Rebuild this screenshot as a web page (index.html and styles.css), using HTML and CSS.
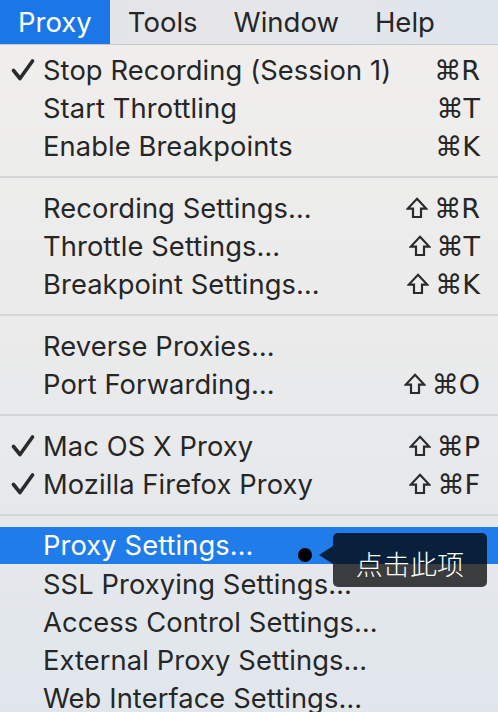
FILE: index.html
```html
<!DOCTYPE html>
<html>
<head>
<meta charset="utf-8">
<link rel="stylesheet" href="styles.css">
</head>
<body>
<div class="screen">
  <div class="menubar">
    <div class="mb-item active">Proxy</div>
    <div class="mb-item">Tools</div>
    <div class="mb-item">Window</div>
    <div class="mb-item">Help</div>
  </div>
  <div class="menu">
    <div class="group first">
      <div class="row"><span class="check"><svg class="tick" viewBox="0 0 24 22"><path d="M2.5 11.5 L9 19.5 L21.5 2"/></svg></span><span class="label">Stop Recording (Session 1)</span><span class="key">⌘R</span></div>
      <div class="row"><span class="check"></span><span class="label">Start Throttling</span><span class="key">⌘T</span></div>
      <div class="row"><span class="check"></span><span class="label">Enable Breakpoints</span><span class="key">⌘K</span></div>
    </div>
    <div class="sep"></div>
    <div class="group">
      <div class="row"><span class="check"></span><span class="label">Recording Settings…</span><span class="key"><svg class="shift" viewBox="0 0 22 22"><path d="M11 1.8 L20.2 11.6 H15 V20 H7 V11.6 H1.8 Z"/></svg>⌘R</span></div>
      <div class="row"><span class="check"></span><span class="label">Throttle Settings…</span><span class="key"><svg class="shift" viewBox="0 0 22 22"><path d="M11 1.8 L20.2 11.6 H15 V20 H7 V11.6 H1.8 Z"/></svg>⌘T</span></div>
      <div class="row"><span class="check"></span><span class="label">Breakpoint Settings…</span><span class="key"><svg class="shift" viewBox="0 0 22 22"><path d="M11 1.8 L20.2 11.6 H15 V20 H7 V11.6 H1.8 Z"/></svg>⌘K</span></div>
    </div>
    <div class="sep"></div>
    <div class="group">
      <div class="row"><span class="check"></span><span class="label">Reverse Proxies…</span><span class="key"></span></div>
      <div class="row"><span class="check"></span><span class="label">Port Forwarding…</span><span class="key"><svg class="shift" viewBox="0 0 22 22"><path d="M11 1.8 L20.2 11.6 H15 V20 H7 V11.6 H1.8 Z"/></svg>⌘O</span></div>
    </div>
    <div class="sep"></div>
    <div class="group">
      <div class="row"><span class="check"><svg class="tick" viewBox="0 0 24 22"><path d="M2.5 11.5 L9 19.5 L21.5 2"/></svg></span><span class="label">Mac OS X Proxy</span><span class="key"><svg class="shift" viewBox="0 0 22 22"><path d="M11 1.8 L20.2 11.6 H15 V20 H7 V11.6 H1.8 Z"/></svg>⌘P</span></div>
      <div class="row"><span class="check"><svg class="tick" viewBox="0 0 24 22"><path d="M2.5 11.5 L9 19.5 L21.5 2"/></svg></span><span class="label">Mozilla Firefox Proxy</span><span class="key"><svg class="shift" viewBox="0 0 22 22"><path d="M11 1.8 L20.2 11.6 H15 V20 H7 V11.6 H1.8 Z"/></svg>⌘F</span></div>
    </div>
    <div class="sep"></div>
    <div class="group">
      <div class="row selected"><span class="check"></span><span class="label">Proxy Settings…</span><span class="key"></span>
        <div class="callout">
          <span class="dot"></span>
          <div class="tip">点击此项</div>
        </div>
      </div>
      <div class="row"><span class="check"></span><span class="label">SSL Proxying Settings…</span><span class="key"></span></div>
      <div class="row"><span class="check"></span><span class="label">Access Control Settings…</span><span class="key"></span></div>
      <div class="row"><span class="check"></span><span class="label">External Proxy Settings…</span><span class="key"></span></div>
      <div class="row"><span class="check"></span><span class="label">Web Interface Settings…</span><span class="key"></span></div>
    </div>
  </div>
</div>
</body>
</html>
```
FILE: styles.css
```css
html, body {
  margin: 0;
  padding: 0;
}
body {
  width: 498px;
  height: 712px;
  overflow: hidden;
  font-family: "Inter", "Noto Sans CJK SC", sans-serif;
  color: #262626;
}
.screen {
  width: 498px;
  height: 712px;
  background: linear-gradient(180deg, #f0efed 0%, #ebebeb 45%, #e0e6ec 100%);
  display: flex;
  flex-direction: column;
}
.menubar {
  height: 45px;
  flex: none;
  display: flex;
  align-items: stretch;
  background: linear-gradient(90deg, #e2e4e8 0%, #e6e6e8 45%, #dfe6ee 100%);
  border-bottom: 1px solid #c4c6c9;
  box-sizing: border-box;
  font-size: 27.5px;
}
.mb-item {
  display: flex;
  align-items: center;
  padding: 0 18px;
  color: #262626;
}
.mb-item.active {
  background: #1b77e7;
  color: #fff;
  padding: 0 18px 0 18px;
}
.menu {
  flex: 1;
  display: flex;
  flex-direction: column;
  padding-top: 6px;
}
.row {
  position: relative;
  height: 38px;
  display: flex;
  align-items: center;
  font-size: 27.3px;
  letter-spacing: 0.1px;
}
.check {
  width: 43px;
  flex: none;
  display: flex;
  align-items: center;
  justify-content: flex-start;
  padding-left: 11px;
  box-sizing: border-box;
}
.tick {
  width: 24px;
  height: 22px;
  fill: none;
  stroke: #2b2b2b;
  stroke-width: 3.6;
  stroke-linecap: round;
  stroke-linejoin: round;
}
.label { flex: 1; }
.key {
  flex: none;
  display: flex;
  align-items: center;
  padding-right: 18px;
  font-family: "DejaVu Sans", sans-serif;
  font-size: 27px;
  letter-spacing: 0;
}
.shift {
  width: 22px;
  height: 22px;
  margin-right: 6px;
  fill: none;
  stroke: #2b2b2b;
  stroke-width: 2.2;
  stroke-linejoin: miter;
}
.sep {
  height: 2px;
  background: #d5d5d5;
  margin: 11px 0;
}
.row.selected {
  background: #1f7ce9;
  color: #fff;
  height: 37px;
  margin-bottom: 1px;
}
.callout {
  position: absolute;
  left: 298px;
  top: 6px;
  display: flex;
  align-items: flex-start;
}
.dot {
  width: 14px;
  height: 14px;
  border-radius: 50%;
  background: #000;
  margin-right: 7px;
  margin-top: 15px;
}
.tip {
  position: relative;
  background: rgba(0, 0, 0, 0.74);
  color: #fff;
  font-family: "Noto Sans CJK SC", sans-serif;
  font-size: 27px;
  font-weight: 300;
  border-radius: 5px;
  width: 154px;
  height: 54px;
  display: flex;
  align-items: center;
  justify-content: center;
  margin-left: 14px;
  padding-top: 6px;
  box-sizing: border-box;
}
.tip::before {
  content: "";
  position: absolute;
  left: -14px;
  top: 13px;
  border-top: 9px solid transparent;
  border-bottom: 9px solid transparent;
  border-right: 14px solid rgba(0, 0, 0, 0.74);
}
```
